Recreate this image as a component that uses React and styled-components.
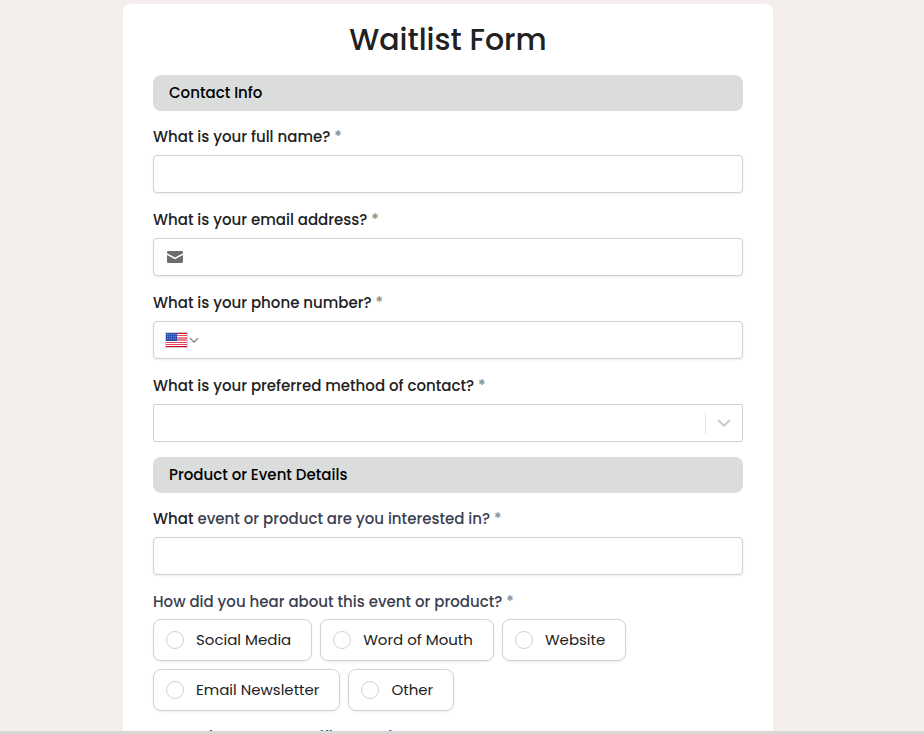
import React, { useId } from 'react';
import styled, { createGlobalStyle } from 'styled-components';

const GlobalStyle = createGlobalStyle`
  * {
    box-sizing: border-box;
  }

  body {
    margin: 0;
    background: #f4efec;
    color: #212121;
    font-family: Poppins, Inter, sans-serif;
    font-size: 15px;
    line-height: 24px;
  }
`;

const Page = styled.main`
  height: 100vh;
  overflow: hidden;
  padding: 4px 44px 0 16px;
`;

const Card = styled.form`
  max-width: 650px;
  margin: 0 auto;
  padding: 15px 30px 30px;
  border-radius: 8px;
  background: #fff;
`;

const Title = styled.h1`
  margin: 0 0 14px;
  font-size: 30px;
  font-weight: 500;
  line-height: 42px;
  text-align: center;
`;

const SectionTitle = styled.h2`
  margin: 0 0 14px;
  padding: 6px 16px;
  border-radius: 8px;
  background: #dadddb;
  color: #000;
  font-size: 15px;
  font-weight: 500;
  line-height: 24px;
`;

const Group = styled.div`
  margin-bottom: 15px;
`;

const Label = styled.label`
  display: block;
  margin-bottom: 6px;
  font-weight: 500;
`;

const Muted = styled.span`
  color: #3b3f51;
`;

const Star = styled.span`
  color: #8a8f8c;
`;

const Box = styled.div`
  display: flex;
  align-items: center;
  gap: 8px;
  height: 38px;
  padding: 0 11px;
  border: 1px solid #d2d2d2;
  border-radius: ${({ $flat }) => ($flat ? '2px' : '4px')};
  background: #fff;
  box-shadow: ${({ $flat }) => ($flat ? 'none' : '0 1px 2px rgba(0, 0, 0, 0.08)')};
`;

const Input = styled.input`
  flex: 1;
  min-width: 0;
  padding: 0;
  border: 0;
  outline: 0;
  background: transparent;
  font: inherit;
`;

const Select = styled.select`
  flex: 1;
  min-width: 0;
  height: 100%;
  border: 0;
  outline: 0;
  appearance: none;
  background: transparent;
  font: inherit;
`;

const TextArea = styled.textarea`
  display: block;
  width: 100%;
  height: 100px;
  padding: 8px 12px;
  border: 1px solid #d2d2d2;
  border-radius: 4px;
  font: inherit;
`;

const Arrow = styled.span`
  display: flex;
  align-items: center;
  height: 21px;
  padding-left: 11px;
  border-left: 1px solid #e2e2e2;
`;

const CountryButton = styled.button`
  display: flex;
  align-items: center;
  gap: 1px;
  padding: 0;
  border: 0;
  background: none;
`;

const Options = styled.fieldset`
  min-width: 0;
  margin: 0 0 14px;
  padding: 0;
  border: 0;
`;

const Legend = styled.legend`
  margin-bottom: 5px;
  padding: 0;
  color: #3b3f51;
  font-weight: 500;
`;

const OptionList = styled.div`
  display: flex;
  flex-wrap: wrap;
  gap: 8px;
`;

const Option = styled.label`
  display: flex;
  align-items: center;
  gap: 12px;
  height: 42px;
  padding: 0 20px 0 12px;
  border: 1px solid #d2d2d2;
  border-radius: 8px;
  box-shadow: 0 1px 2px rgba(0, 0, 0, 0.08);
`;

const Radio = styled.input`
  width: 18px;
  height: 18px;
  margin: 0;
  border: 1px solid #d2d2d2;
  border-radius: 50%;
  appearance: none;

  &:checked {
    border: 5px solid #3b3f51;
  }
`;

const BottomLine = styled.div`
  position: fixed;
  right: 0;
  bottom: 0;
  left: 0;
  height: 3px;
  background: #d8d8d8;
`;

const MailIcon = () => (
  <svg width="19" height="14" viewBox="-1 0 19 14" fill="#6b6c6e" aria-hidden="true">
    <path d="M2 1h14q1 0 1 1v1.200L9 7.400 1 3.200V2q0-1 1-1z" />
    <path d="M1 5l8 4.300L17 5v6.500q0 1.500-1.500 1.500h-13Q1 13 1 11.500z" />
  </svg>
);

const Flag = () => (
  <svg width="23" height="16" viewBox="0 0 23 16" aria-hidden="true">
    <path d="M0 0h23v16H0z" fill="#d0d0d0" />
    <path d="M1 1h21v14H1z" fill="#fff" />
    <path d="M1 1h21v1H1zM1 14h21v1H1z" fill="#d80027" />
    <path d="M1 3h21v1H1zM1 10h21v1H1zM1 12h21v1H1z" fill="#e54560" />
    <path d="M1 5h21v4H1z" fill="#ec7f92" />
    <path d="M1 1h11v8H1z" fill="#2e52b2" />
    <path d="M2 2.500h9M2 4.500h9M2 6.500h9" stroke="#6f88cb" strokeDasharray="1 1" />
  </svg>
);

const Chevron = ({ size, height, color, width }) => (
  <svg width={size} height={height} viewBox="0 0 12 8" fill="none" aria-hidden="true">
    <path d="m1.500 1.500 4.500 4.500 4.500-4.500" stroke={color} strokeWidth={width} strokeLinecap="round" />
  </svg>
);

const Required = () => <Star>&nbsp;*</Star>;

const Field = ({ label, type = 'text', icon }) => {
  const id = useId();

  return (
    <Group>
      <Label htmlFor={id}>
        {label}
        <Required />
      </Label>
      <Box>
        {icon}
        <Input id={id} type={type} />
      </Box>
    </Group>
  );
};

const sources = ['Social Media', 'Word of Mouth', 'Website', 'Email Newsletter', 'Other'];

const App = () => (
  <Page>
    <GlobalStyle />
    <Card>
      <Title>Waitlist Form</Title>
      <SectionTitle>Contact Info</SectionTitle>
      <Field label="What is your full name?" />
      <Field label="What is your email address?" type="email" icon={<MailIcon />} />
      <Field
        label="What is your phone number?"
        type="tel"
        icon={(
          <CountryButton type="button" aria-label="Country">
            <Flag />
            <Chevron size={10} height={7} color="#777" width={1.5} />
          </CountryButton>
        )}
      />
      <Group>
        <Label htmlFor="contact">
          What is your preferred method of contact?
          <Required />
        </Label>
        <Box $flat>
          <Select id="contact">
            <option aria-label="None" />
          </Select>
          <Arrow>
            <Chevron size={14} height={9} color="#ccc" width={2} />
          </Arrow>
        </Box>
      </Group>
      <SectionTitle>Product or Event Details</SectionTitle>
      <Field label={<>What <Muted>event or product are you interested in?</Muted></>} />
      <Options>
        <Legend>
          How did you hear about this event or product?
          <Required />
        </Legend>
        <OptionList>
          {sources.map((source) => (
            <Option key={source}>
              <Radio type="radio" name="source" />
              {source}
            </Option>
          ))}
        </OptionList>
      </Options>
      <Group>
        <Label htmlFor="questions">
          <Muted>Do you have any specific questions or concerns?</Muted>
        </Label>
        <TextArea id="questions" />
      </Group>
    </Card>
    <BottomLine />
  </Page>
);

export default App;
